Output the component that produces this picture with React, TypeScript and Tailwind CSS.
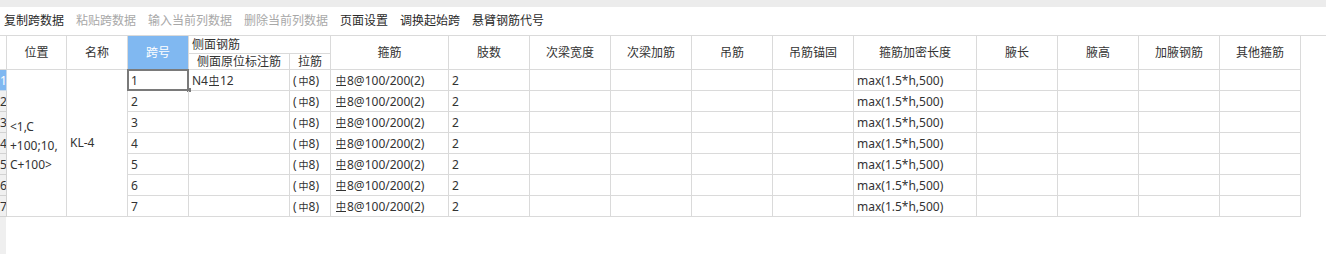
import React from 'react'

const TOOLBAR = [
  { label: '复制跨数据', enabled: true },
  { label: '粘贴跨数据', enabled: false },
  { label: '输入当前列数据', enabled: false },
  { label: '删除当前列数据', enabled: false },
  { label: '页面设置', enabled: true },
  { label: '调换起始跨', enabled: true },
  { label: '悬臂钢筋代号', enabled: true },
]

const TAIL_HEADERS = ['肢数', '次梁宽度', '次梁加筋', '吊筋', '吊筋锚固', '箍筋加密长度', '腋长', '腋高', '加腋钢筋', '其他箍筋']

const SPANS = [1, 2, 3, 4, 5, 6, 7]

const cell = 'border-r border-b border-[#dadada]'

// HPB300 / HRB400 rebar marks
function Hpb() {
  return <span className="inline-block ml-[2px] text-[10px] leading-none align-[1px]">中</span>
}

function Hrb() {
  return (
    <span className="inline-block text-[10px] leading-[9px] border-b border-[#333] align-[1px] mx-px">中</span>
  )
}

export default function App() {
  return (
    <div className="flex h-[254px] w-[1326px] flex-col overflow-hidden bg-white text-[12px] text-[#333] font-['Noto_Sans','Noto_Sans_CJK_SC',sans-serif]">
      <div className="h-[7px] shrink-0 bg-[#ececec]" />

      <div className="flex h-[28px] shrink-0 items-center gap-3 pl-1">
        {TOOLBAR.map((t) => (
          <span key={t.label} className={t.enabled ? 'text-[#2a2a2a]' : 'text-[#a8a8a8]'}>
            {t.label}
          </span>
        ))}
      </div>

      <div className="shrink-0 border-t border-[#dadada]">
        <div className="grid grid-cols-[7px_60px_61px_61px_101px_41px_118px_81px_81px_81px_81px_81px_123px_81px_81px_81px_81px] grid-rows-[18px_16px_repeat(7,21px)] w-fit">
          {/* header */}
          <div className={`row-span-2 ${cell}`} />
          <div className={`row-span-2 flex items-center justify-center ${cell}`}>位置</div>
          <div className={`row-span-2 flex items-center justify-center ${cell}`}>名称</div>
          <div className={`row-span-2 flex items-center justify-center bg-[#80b8f1] text-white ${cell}`}>跨号</div>
          <div className={`col-span-2 flex items-center pl-[3px] ${cell}`}>侧面钢筋</div>
          <div className={`row-span-2 flex items-center justify-center ${cell}`}>箍筋</div>
          {TAIL_HEADERS.map((h) => (
            <div key={h} className={`row-span-2 flex items-center justify-center ${cell}`}>
              {h}
            </div>
          ))}
          <div className={`flex items-center justify-center ${cell}`}>侧面原位标注筋</div>
          <div className={`flex items-center justify-center ${cell}`}>拉筋</div>

          {/* rows */}
          {SPANS.map((n) => (
            <React.Fragment key={n}>
              <div
                className={`overflow-hidden leading-[21px] border-r border-b ${
                  n === 1 ? 'bg-[#80b8f1] text-white border-[#c9d9ea]' : 'bg-[#f0f0f0] text-[#333] border-[#d2d2d2]'
                }`}
              >
                {n}
              </div>
              {n === 1 && (
                <>
                  <div className={`row-span-7 flex flex-col justify-center pl-[3px] pt-[5px] leading-[19px] ${cell}`}>
                    <span>&lt;1,C</span>
                    <span>+100;10,</span>
                    <span>C+100&gt;</span>
                  </div>
                  <div className={`row-span-7 flex items-center pl-[3px] ${cell}`}>KL-4</div>
                </>
              )}
              <div className={`relative flex items-center pl-[3px] pt-px ${cell}`}>
                {n}
                {n === 1 && (
                  <>
                    <div className="absolute -left-px -top-px h-[22px] w-[62px] border-2 border-[#7a7a7a]" />
                    <div className="absolute -bottom-[2px] -right-[3px] h-[4px] w-[4px] bg-[#7a7a7a]" />
                  </>
                )}
              </div>
              <div className={`flex items-center pl-[3px] pt-px ${cell}`}>
                {n === 1 && (
                  <>
                    N4<Hrb />12
                  </>
                )}
              </div>
              <div className={`flex items-center pl-[3px] pt-px ${cell}`}>
                (<Hpb />8)
              </div>
              <div className={`flex items-center pl-[4px] pt-px ${cell}`}>
                <Hrb />8@100/200(2)
              </div>
              <div className={`flex items-center pl-[3px] pt-px ${cell}`}>2</div>
              <div className={cell} />
              <div className={cell} />
              <div className={cell} />
              <div className={cell} />
              <div className={`flex items-center pl-[3px] pt-px ${cell}`}>max(1.5*h,500)</div>
              <div className={cell} />
              <div className={cell} />
              <div className={cell} />
              <div className={cell} />
            </React.Fragment>
          ))}
        </div>
      </div>

      <div className="flex-1">
        <div className="h-full w-[6px] bg-[#efefef]" />
      </div>
    </div>
  )
}
